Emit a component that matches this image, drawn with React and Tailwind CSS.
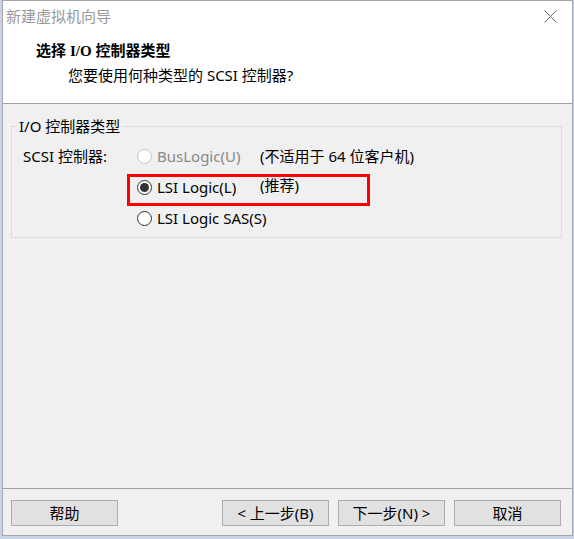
import React from 'react';

const font = { fontFamily: '"Noto Sans", "Noto Sans CJK SC", sans-serif' };

function Radio({ checked, disabled }) {
  return (
    <span
      className={`flex h-[15px] w-[15px] shrink-0 items-center justify-center rounded-full border bg-white ${
        disabled ? 'border-[#c4c4c4]' : 'border-[#333333]'
      }`}
    >
      {checked && <span className="h-[9px] w-[9px] rounded-full bg-[#333333]" />}
    </span>
  );
}

function WinButton({ children }) {
  return (
    <button className="flex h-[26px] w-[107px] items-center justify-center border border-[#adadad] bg-[#e1e1e1] text-[15px] text-black">
      {children}
    </button>
  );
}

export default function App() {
  return (
    <div className="flex h-[539px] w-[574px] bg-[#c9d3e6] pl-[2px]" style={font}>
      <div className="flex h-[536px] w-[571px] flex-col border border-[#a6a6a6] bg-[#f0f0f0]">
        {/* title bar */}
        <div className="flex h-[31px] items-center justify-between bg-white pl-[3px] pr-[15px]">
          <span className="text-[15px] text-[#999999]">新建虚拟机向导</span>
          <svg width="13" height="13" viewBox="0 0 13 13" className="text-[#6b6b6b]">
            <path d="M0.5 0.5 L12.5 12.5 M12.5 0.5 L0.5 12.5" stroke="currentColor" strokeWidth="1" fill="none" />
          </svg>
        </div>

        {/* header */}
        <div className="h-[72px] border-b border-[#a0a0a0] bg-white pt-[6px]">
          <div className="pl-[33px] text-[15px] font-bold leading-[24px] text-black">
            选择 <span style={{ fontFamily: '"Liberation Serif", serif' }}>I/O</span> 控制器类型
          </div>
          <div className="pl-[65px] text-[15px] leading-[24px] text-black">您要使用何种类型的 SCSI 控制器?</div>
        </div>

        {/* body */}
        <div className="h-[384px] pt-[22px] pl-[8px] pr-[10px]">
          <div className="relative h-[112px] border border-[#dcdcdc] pt-[14px]">
            <span className="absolute left-[5px] top-[-11px] bg-[#f0f0f0] px-[2px] text-[15px] leading-[20px] text-black">
              I/O 控制器类型
            </span>

            <div className="flex h-[31px] items-center text-[15px]">
              <span className="w-[125px] pl-[11px] text-black">SCSI 控制器:</span>
              <Radio disabled />
              <span className="ml-[5px] w-[103px] text-[#8a8a8a]">BusLogic(U)</span>
              <span className="text-black">(不适用于 64 位客户机)</span>
            </div>

            <div className="relative flex h-[31px] items-center text-[15px]">
              <div className="absolute left-[115px] top-[2px] h-[32px] w-[243px] border-[3px] border-[#ff0000]" />
              <span className="w-[125px]" />
              <Radio checked />
              <span className="ml-[5px] w-[103px] text-black">LSI Logic(L)</span>
              <span className="mt-[-4px] text-black">(推荐)</span>
            </div>

            <div className="flex h-[31px] items-center text-[15px]">
              <span className="w-[125px]" />
              <Radio />
              <span className="ml-[5px] text-black">LSI Logic SAS(S)</span>
            </div>
          </div>
        </div>

        {/* footer */}
        <div className="flex flex-1 items-start border-t border-[#a0a0a0] pt-[11px] pl-[8px]">
          <WinButton>帮助</WinButton>
          <div className="ml-[104px] flex gap-[9px]">
            <WinButton>&lt; 上一步(B)</WinButton>
            <WinButton>下一步(N) &gt;</WinButton>
            <WinButton>取消</WinButton>
          </div>
        </div>
      </div>
    </div>
  );
}
